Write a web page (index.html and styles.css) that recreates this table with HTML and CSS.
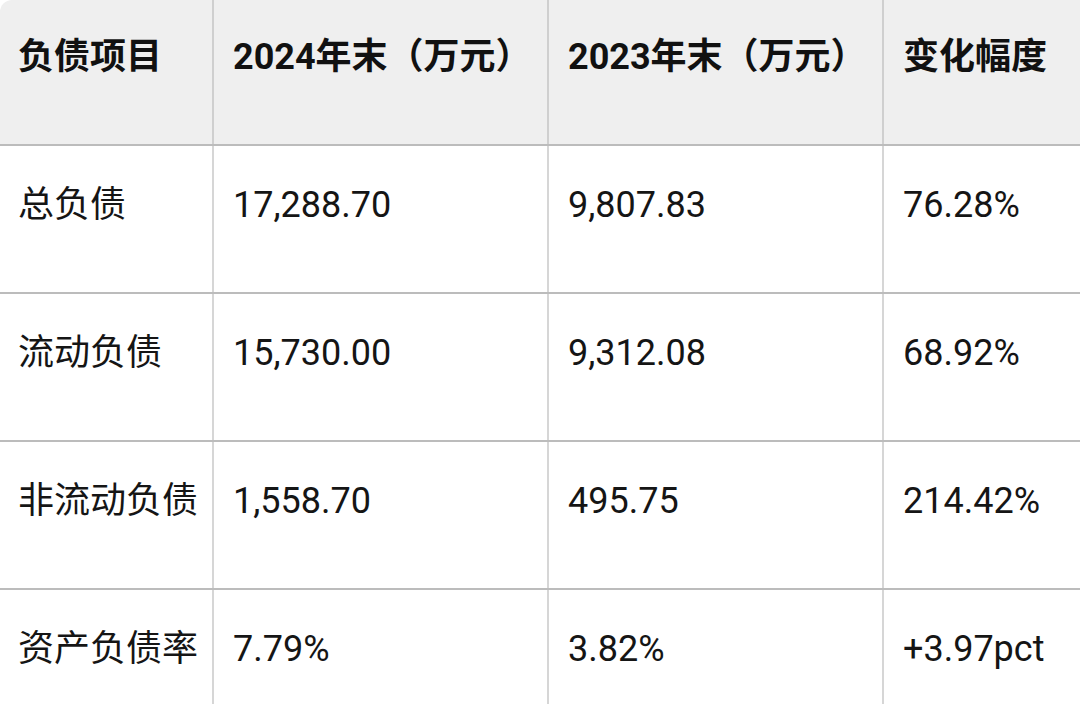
FILE: index.html
```html
<!DOCTYPE html>
<html lang="zh-CN">
<head>
<meta charset="utf-8">
<link rel="stylesheet" href="styles.css">
</head>
<body>
<div class="table">
  <div class="row head">
    <div class="cell first">负债项目</div>
    <div class="cell">2024年末（万元）</div>
    <div class="cell">2023年末（万元）</div>
    <div class="cell">变化幅度</div>
  </div>
  <div class="row">
    <div class="cell">总负债</div>
    <div class="cell">17,288.70</div>
    <div class="cell">9,807.83</div>
    <div class="cell">76.28%</div>
  </div>
  <div class="row">
    <div class="cell">流动负债</div>
    <div class="cell">15,730.00</div>
    <div class="cell">9,312.08</div>
    <div class="cell">68.92%</div>
  </div>
  <div class="row">
    <div class="cell">非流动负债</div>
    <div class="cell">1,558.70</div>
    <div class="cell">495.75</div>
    <div class="cell">214.42%</div>
  </div>
  <div class="row">
    <div class="cell">资产负债率</div>
    <div class="cell">7.79%</div>
    <div class="cell">3.82%</div>
    <div class="cell">+3.97pct</div>
  </div>
</div>
</body>
</html>
```

FILE: styles.css
```css
html, body {
  margin: 0;
  padding: 0;
  background: #ffffff;
}

body {
  width: 1080px;
  height: 704px;
  overflow: hidden;
  font-family: Roboto, "Noto Sans CJK SC", sans-serif;
  color: #151515;
}

.table {
  display: flex;
  flex-direction: column;
  width: 1080px;
}

.row {
  display: grid;
  grid-template-columns: 212px 335px 335px 198px;
  height: 148px;
  box-sizing: border-box;
  border-bottom: 2px solid #bcbcbc;
}

.row.head {
  height: 146px;
  background: #efefef;
  border-top-left-radius: 12px;
}

.row.head .cell {
  font-weight: 700;
  color: #111111;
  padding-top: 36px;
}

.cell {
  box-sizing: border-box;
  padding: 38px 0 0 18px;
  font-size: 36px;
  line-height: 43px;
  white-space: nowrap;
  overflow: visible;
}

.cell + .cell {
  border-left: 2px solid #d6d6d6;
  padding-left: 19px;
}

.row.head .cell + .cell {
  border-left-color: #cfcfcf;
}
```
